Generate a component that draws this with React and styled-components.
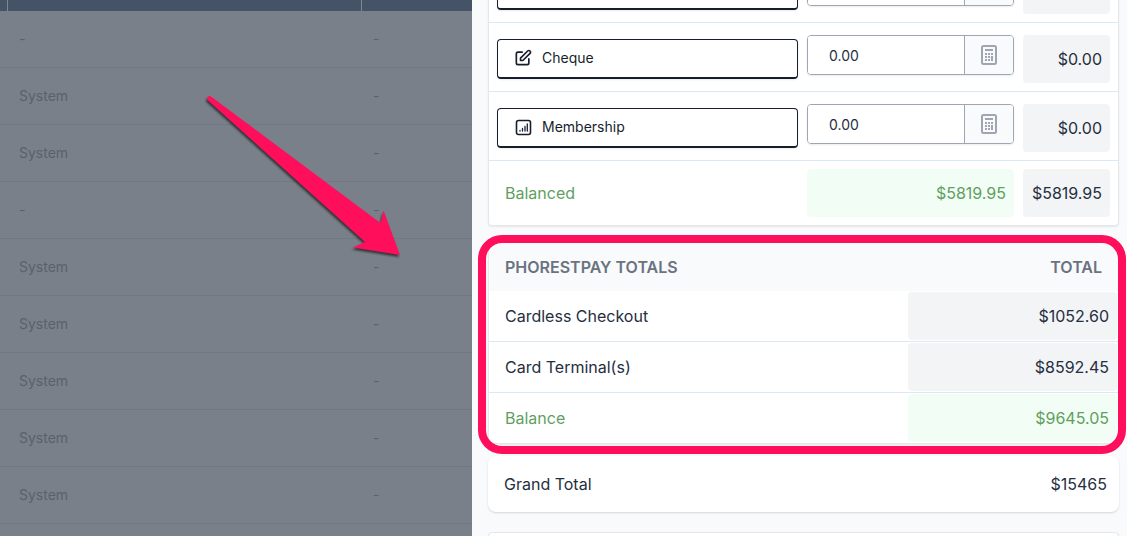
import React from 'react';
import styled, { createGlobalStyle } from 'styled-components';

const GlobalStyle = createGlobalStyle`
  * {
    box-sizing: border-box;
  }
  body {
    margin: 0;
    background-color: #fff;
    color: #252f3f;
    font-family: Inter, 'Liberation Sans', sans-serif;
    font-size: 16px;
    line-height: 24px;
  }
`;

const Page = styled.div`
  position: relative;
  display: flex;
  height: 100vh;
  overflow: hidden;
`;

const Backdrop = styled.main`
  flex: 1;
  min-width: 0;
  overflow: hidden;
  background-color: #7a8089;
`;

const LogTable = styled.table`
  width: 100%;
  margin-top: -46px;
  table-layout: fixed;
  border-collapse: separate;
  border-spacing: 0;
  font-size: 14px;
  line-height: 20px;
  color: #59616e;
`;

const MarkerCol = styled.col`
  width: 8px;
`;

const NameCol = styled.col`
  width: 75%;
`;

const HeadCell = styled.th`
  height: 57px;
  padding: 0;
  background-color: #445366;
  border-right: 1px solid #7f8791;

  &:last-child {
    border-right: 0;
  }
`;

const LogCell = styled.td`
  height: 57px;
  padding: 0 11px;
  border-bottom: 1px solid #727883;

  &:first-child {
    padding: 0;
  }
`;

const Drawer = styled.aside`
  flex: none;
  width: 674px;
  padding-right: 19px;
  background-color: #fff;
`;

const DrawerBody = styled.div`
  height: 100%;
  padding: 0 8px 0 16px;
  overflow: hidden;
  background-color: #f9fafc;
`;

const Card = styled.section`
  background-color: #fff;
  border: 1px solid #e5e7eb;
  border-radius: 4px;
  box-shadow: 0 1px 2px rgba(0, 0, 0, .08);
`;

const PaymentsCard = styled(Card)`
  margin-top: -47px;
`;

const PaymentRow = styled.div`
  display: grid;
  grid-template-columns: 301fr 207fr 87fr;
  gap: 9px;
  align-items: start;
  padding: ${({ $total }) => ($total ? '8px' : '12px 8px 8px')};
  border-bottom: ${({ $total }) => ($total ? '0' : '1px solid #dbe8f8')};
`;

const MethodButton = styled.button`
  display: flex;
  align-items: center;
  gap: 9px;
  height: 40px;
  margin-top: 4px;
  padding: 0 15px 2px;
  background-color: #fff;
  border: 1px solid #161e2e;
  border-bottom-width: 2px;
  border-radius: 4px;
  box-shadow: 0 1px 2px rgba(0, 0, 0, .08);
  color: #161e2e;
  font: inherit;
  font-size: 14px;
  line-height: 20px;
`;

const AmountField = styled.div`
  display: flex;
  height: 40px;
  overflow: hidden;
  border: 1px solid #9fa6b2;
  border-radius: 4px;
  box-shadow: 0 1px 2px rgba(0, 0, 0, .08);
`;

const AmountInput = styled.input`
  flex: 1;
  min-width: 0;
  padding: 2px 21px 0;
  background-color: #fff;
  border: 0;
  color: #252f3f;
  font: inherit;
  font-size: 14px;
`;

const CalcButton = styled.button`
  display: flex;
  align-items: center;
  justify-content: center;
  width: 49px;
  padding: 0;
  background-color: #f9fafc;
  border: 0;
  border-left: 1px solid #9fa6b2;
  color: #9fa6b2;
`;

const Amount = styled.div`
  height: 48px;
  padding: 12px 8px;
  background-color: ${({ $green }) => ($green ? '#f2fdf5' : '#f3f4f6')};
  border-radius: 4px;
  color: ${({ $green }) => ($green ? '#5f9f5f' : '#252f3f')};
  text-align: right;
`;

const RowLabel = styled.div`
  padding: 12px 8px;
  color: ${({ $green }) => ($green ? '#5f9f5f' : '#252f3f')};
`;

const TotalsWrap = styled.div`
  position: relative;
  margin-top: 16px;
`;

const Highlight = styled.div`
  position: absolute;
  inset: -7px -7px -10px -10px;
  border: 8px solid #ff0f5b;
  border-radius: 24px;
  pointer-events: none;
`;

const TotalsHead = styled.header`
  display: flex;
  justify-content: space-between;
  padding: 12px 16px;
  background-color: #f9fafc;
  color: #6b7280;
  font-weight: 600;
`;

const TotalsRow = styled.div`
  display: grid;
  grid-template-columns: 2fr 1fr;
  padding: 1px 1px 1px 0;
  border-bottom: 1px solid #dbe8f8;

  &:last-child {
    border-bottom: 0;
  }

  ${RowLabel} {
    padding-left: 16px;
  }
`;

const GrandTotal = styled.section`
  display: flex;
  justify-content: space-between;
  margin: 12px 0 20px;
  padding: 16px 12px 16px 16px;
  background-color: #fff;
  border-radius: 8px;
  box-shadow: 0 1px 2px rgba(0, 0, 0, .15);
`;

const NextCard = styled(Card)`
  height: 80px;
`;

const Arrow = styled.svg`
  position: absolute;
  top: 80px;
  left: 190px;
  filter: drop-shadow(-1px 2px 1px rgba(0, 0, 0, .6));
  pointer-events: none;
`;

const EditIcon = () => (
  <svg width="20" height="20" viewBox="0 0 24 24" fill="none" stroke="currentColor" strokeWidth="2" strokeLinecap="round" strokeLinejoin="round">
    <path d="M11 5H6a2 2 0 00-2 2v11a2 2 0 002 2h11a2 2 0 002-2v-5m-1.414-9.414a2 2 0 112.828 2.828L11.828 15H9v-2.828l8.586-8.586z" />
  </svg>
);

const ChartIcon = () => (
  <svg width="20" height="20" viewBox="0 0 20 20" fill="none" stroke="currentColor" strokeLinecap="round">
    <rect x="3.500" y="3.500" width="14" height="14" rx="2" strokeWidth="1.600" />
    <path d="M7 13.500v.5M9.500 11.500V14M12 9.500V14M14.300 7V14" strokeWidth="1.300" />
  </svg>
);

const CalculatorIcon = () => (
  <svg width="16" height="20" viewBox="0 0 16 20" fill="none">
    <rect x="1" y="1" width="14" height="18" rx="1.5" stroke="currentColor" strokeWidth="2" />
    <path
      fill="currentColor"
      d="M4 4h8v2H4zM4 8h2v2H4zM7 8h2v2H7zM10 8h2v2h-2zM4 11h2v2H4zM7 11h2v2H7zM10 11h2v5h-2zM4 14h2v2H4zM7 14h2v2H7z"
    />
  </svg>
);

const logRows = ['-', 'System', 'System', '-', 'System', 'System', 'System', 'System', 'System'];

const payments = [
  { id: 'other' },
  { id: 'cheque', name: 'Cheque', icon: <EditIcon />, value: '0.00', total: '$0.00' },
  { id: 'membership', name: 'Membership', icon: <ChartIcon />, value: '0.00', total: '$0.00' },
];

const totals = [
  { name: 'Cardless Checkout', total: '$1052.60' },
  { name: 'Card Terminal(s)', total: '$8592.45' },
  { name: 'Balance', total: '$9645.05', green: true },
];

const Payment = ({ name, icon, value, total }) => (
  <PaymentRow>
    <MethodButton type="button">
      {icon}
      {name}
    </MethodButton>
    <AmountField>
      <AmountInput type="text" aria-label={name} defaultValue={value} />
      <CalcButton type="button" aria-label="Calculator">
        {icon && <CalculatorIcon />}
      </CalcButton>
    </AmountField>
    <Amount>{total}</Amount>
  </PaymentRow>
);

export default function App() {
  return (
    <>
      <GlobalStyle />
      <Page>
        <Backdrop>
          <LogTable>
            <colgroup>
              <MarkerCol />
              <NameCol />
              <col />
            </colgroup>
            <thead>
              <tr>
                <HeadCell />
                <HeadCell />
                <HeadCell />
              </tr>
            </thead>
            <tbody>
              {logRows.map((name, i) => (
                <tr key={i}>
                  <LogCell />
                  <LogCell>{name}</LogCell>
                  <LogCell>-</LogCell>
                </tr>
              ))}
            </tbody>
          </LogTable>
        </Backdrop>
        <Drawer>
          <DrawerBody>
            <PaymentsCard>
              {payments.map((item) => <Payment key={item.id} {...item} />)}
              <PaymentRow $total>
                <RowLabel $green>Balanced</RowLabel>
                <Amount $green>$5819.95</Amount>
                <Amount>$5819.95</Amount>
              </PaymentRow>
            </PaymentsCard>
            <TotalsWrap>
              <Card>
                <TotalsHead>
                  <span>PHORESTPAY TOTALS</span>
                  <span>TOTAL</span>
                </TotalsHead>
                {totals.map(({ name, total, green }) => (
                  <TotalsRow key={name}>
                    <RowLabel $green={green}>{name}</RowLabel>
                    <Amount $green={green}>{total}</Amount>
                  </TotalsRow>
                ))}
              </Card>
              <Highlight />
            </TotalsWrap>
            <GrandTotal>
              <span>Grand Total</span>
              <span>$15465</span>
            </GrandTotal>
            <NextCard />
          </DrawerBody>
        </Drawer>
        <Arrow width="230" height="190" viewBox="0 0 230 190">
          <path
            fill="#ff0f5b"
            d="M17.500 17.500Q18.500 15 21 16.500L190.500 143L193.500 130.500L210 175L163 167.500L175 162L17.500 20Q16.500 18.500 17.500 17.500Z"
          />
        </Arrow>
      </Page>
    </>
  );
}
